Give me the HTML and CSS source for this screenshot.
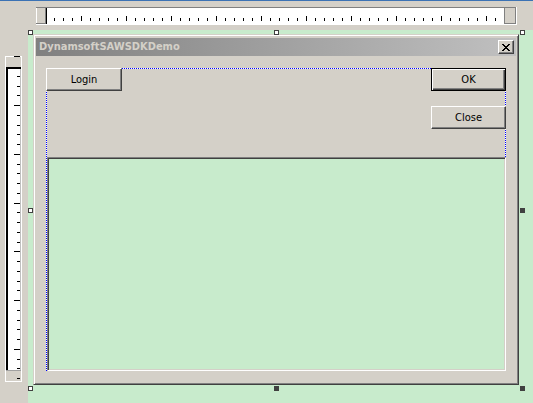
FILE: index.html
```html
<!DOCTYPE html>
<html>
<head>
<meta charset="utf-8">
<title>DynamsoftSAWSDKDemo</title>
<link rel="stylesheet" href="styles.css">
</head>
<body>
<div class="topbar">
  <svg class="hruler" width="481" height="18" viewBox="0 0 481 18" shape-rendering="crispEdges">
    <defs>
      <pattern id="hs" x="0" y="0" width="9" height="18" patternUnits="userSpaceOnUse"><rect x="0" y="11" width="1" height="3" fill="#000"/></pattern>
      <pattern id="hl" x="0" y="0" width="45" height="18" patternUnits="userSpaceOnUse"><rect x="0" y="9" width="1" height="5" fill="#000"/></pattern>
    </defs>
    <rect x="0" y="0" width="481" height="18" fill="#d4d0c8"/>
    <rect x="0" y="0" width="480" height="1" fill="#808080"/>
    <rect x="11" y="1" width="458" height="16" fill="#fff"/>
    <rect x="11" y="1" width="458" height="16" fill="url(#hs)"/>
    <rect x="11" y="1" width="458" height="16" fill="url(#hl)"/>
    <rect x="10" y="1" width="1" height="16" fill="#000"/>
    <rect x="0" y="1" width="1" height="16" fill="#fff"/>
    <rect x="9" y="1" width="1" height="16" fill="#808080"/>
    <rect x="0" y="16" width="10" height="1" fill="#808080"/>
    <rect x="468" y="1" width="1" height="16" fill="#808080"/>
    <rect x="479" y="1" width="1" height="16" fill="#808080"/>
    <rect x="469" y="16" width="10" height="1" fill="#808080"/>
    <rect x="0" y="17" width="481" height="1" fill="#fff"/>
    <rect x="480" y="0" width="1" height="18" fill="#fff"/>
  </svg>
</div>
<div class="leftbar">
  <svg class="vruler" width="17" height="326" viewBox="0 0 17 326" shape-rendering="crispEdges">
    <rect x="0" y="0" width="17" height="326" fill="#d4d0c8"/>
    <rect x="1" y="11" width="15" height="303" fill="#fff"/>
    <rect x="1" y="11" width="2" height="303" fill="#000"/>
    <rect x="1" y="11" width="15" height="2" fill="#000"/>
    <rect x="15" y="13" width="1" height="301" fill="#c0c0c0"/>
    <rect x="0" y="0" width="17" height="1" fill="#fff"/>
    <rect x="0" y="0" width="1" height="326" fill="#fff"/>
    <rect x="16" y="0" width="1" height="326" fill="#fff"/>
    <rect x="0" y="325" width="17" height="1" fill="#fff"/>
    <rect x="1" y="314" width="15" height="1" fill="#a0a0a0"/>
    <path fill="#000" d="M9 0h6v1H9z
      M12 20h3v1h-3z M12 30h3v1h-3z M12 39h3v1h-3z M9 49h6v1H9z
      M12 59h3v1h-3z M12 69h3v1h-3z M12 78h3v1h-3z M12 88h3v1h-3z M9 98h6v1H9z
      M12 108h3v1h-3z M12 117h3v1h-3z M12 127h3v1h-3z M12 137h3v1h-3z M9 147h6v1H9z
      M12 156h3v1h-3z M12 166h3v1h-3z M12 176h3v1h-3z M12 186h3v1h-3z M9 195h6v1H9z
      M12 205h3v1h-3z M12 215h3v1h-3z M12 225h3v1h-3z M12 234h3v1h-3z M9 244h6v1H9z
      M12 254h3v1h-3z M12 264h3v1h-3z M12 273h3v1h-3z M12 283h3v1h-3z M9 293h6v1H9z
      M12 303h3v1h-3z M12 312h3v1h-3z M12 322h3v1h-3z"/>
  </svg>
</div>
<div class="canvas">
  <div class="form">
    <div class="titlebar">
      <span class="title">DynamsoftSAWSDKDemo</span>
      <span class="xbtn">
        <svg width="8" height="7" viewBox="0 0 8 7" shape-rendering="crispEdges"><path fill="#000" d="M0 0h2v1H0z M6 0h2v1H6z M1 1h2v1H1z M5 1h2v1H5z M2 2h4v1H2z M3 3h2v1H3z M2 4h4v1H2z M1 5h2v1H1z M5 5h2v1H5z M0 6h2v1H0z M6 6h2v1H6z"/></svg>
      </span>
    </div>
    <div class="client">
      <div class="panel">
        <div class="toolbar">
          <button class="btn login">Login</button>
          <div class="actions">
            <button class="btn default">OK</button>
            <button class="btn">Close</button>
          </div>
        </div>
        <div class="list"></div>
      </div>
    </div>
  </div>
  <span class="handle h-tl"></span>
  <span class="handle h-tm"></span>
  <span class="handle h-tr"></span>
  <span class="handle h-ml"></span>
  <span class="handle filled h-mr"></span>
  <span class="handle h-bl"></span>
  <span class="handle filled h-bm"></span>
  <span class="handle filled h-br"></span>
</div>
</body>
</html>
```
FILE: styles.css
```css
html, body {
  margin: 0;
  padding: 0;
}
body {
  width: 533px;
  height: 403px;
  overflow: hidden;
  background: #d4d0c8;
  display: grid;
  grid-template-columns: 28px 505px;
  grid-template-rows: 30px 373px;
  font-family: Tahoma, "DejaVu Sans Condensed", "Liberation Sans", sans-serif;
  font-size: 11px;
}
svg { display: block; }

.topbar {
  grid-column: 1 / -1;
  box-sizing: border-box;
  border-top: 1px solid #3b72b4;
  padding: 6px 0 0 36px;
}
.leftbar {
  padding: 26px 0 0 5px;
}
.canvas {
  position: relative;
  background: #c8ebcc;
  padding: 4px 0 0 5px;
}

.form {
  box-sizing: border-box;
  width: 486px;
  height: 351px;
  border: 1px solid;
  border-color: #d4d0c8 #404040 #404040 #d4d0c8;
  box-shadow: inset 1px 1px #fff, inset -1px -1px #808080;
  padding: 3px 2px 2px 2px;
  background: #d4d0c8;
  display: flex;
  flex-direction: column;
}
.titlebar {
  height: 18px;
  flex: none;
  display: flex;
  align-items: center;
  justify-content: space-between;
  padding: 0 2px 0 3px;
  background: linear-gradient(90deg, #808080, #c0c0c0);
}
.title {
  color: #d4d0c8;
  font-weight: bold;
  font-size: 11px;
  line-height: 18px;
  white-space: nowrap;
}
.xbtn {
  box-sizing: border-box;
  width: 16px;
  height: 14px;
  display: flex;
  align-items: center;
  justify-content: center;
  background: #d4d0c8;
  border: 1px solid;
  border-color: #fff #404040 #404040 #fff;
  box-shadow: inset -1px -1px #808080;
}

.client {
  flex: 1;
  display: flex;
  padding: 12px 10px 11px 10px;
}
.panel {
  flex: 1;
  display: flex;
  flex-direction: column;
  background:
    repeating-linear-gradient(90deg, #0000ff 0 1px, #fff 1px 2px) top left / 100% 1px no-repeat,
    repeating-linear-gradient(90deg, #0000ff 0 1px, #fff 1px 2px) bottom left / 100% 1px no-repeat,
    repeating-linear-gradient(180deg, #0000ff 0 1px, #fff 1px 2px) top left / 1px 100% no-repeat,
    repeating-linear-gradient(180deg, #0000ff 0 1px, #fff 1px 2px) top right / 1px 100% no-repeat,
    #d4d0c8;
}
.toolbar {
  height: 89px;
  flex: none;
  display: flex;
  justify-content: space-between;
  align-items: flex-start;
}
.actions {
  display: flex;
  flex-direction: column;
  gap: 15px;
}
.btn {
  box-sizing: border-box;
  width: 75px;
  height: 23px;
  margin: 0;
  padding: 0;
  font-family: inherit;
  font-size: 11px;
  color: #000;
  background: #d4d0c8;
  border: 1px solid;
  border-color: #fff #404040 #404040 #fff;
  box-shadow: inset -1px -1px #808080;
  border-radius: 0;
}
.btn.login {
  width: 76px;
}
.btn.default {
  border-color: #000;
  box-shadow: inset 1px 1px #fff, inset -1px -1px #404040, inset -2px -2px #808080;
}
.list {
  flex: 1;
  margin-left: 1px;
  background: #c8ebcc;
  border: 1px solid;
  border-color: #808080 #fff #fff #808080;
  box-shadow: inset 1px 1px #404040, inset -1px -1px #d4d0c8;
}

.handle {
  position: absolute;
  box-sizing: border-box;
  width: 5px;
  height: 5px;
  border: 1px solid #404040;
  background: #fff;
}
.handle.filled {
  background: #404040;
}
.h-tl { left: 0; top: 0; }
.h-tm { left: 246px; top: 0; }
.h-tr { left: 492px; top: 0; }
.h-ml { left: 0; top: 178px; }
.h-mr { left: 492px; top: 178px; }
.h-bl { left: 0; top: 356px; }
.h-bm { left: 246px; top: 356px; }
.h-br { left: 492px; top: 356px; }
```
